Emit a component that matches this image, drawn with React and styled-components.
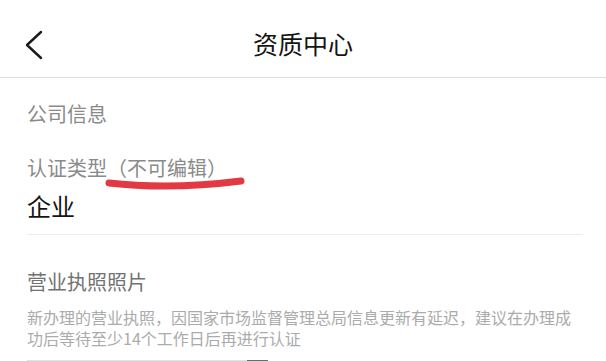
import React from "react";
import styled, { createGlobalStyle } from "styled-components";

const GlobalStyle = createGlobalStyle`
  html, body {
    margin: 0;
    padding: 0;
    background: #fff;
  }
  body {
    font-family: "Noto Sans CJK SC", "Noto Sans", sans-serif;
    overflow: hidden;
  }
`;

const Page = styled.div`
  width: 606px;
  height: 361px;
  overflow: hidden;
  background: #fff;
`;

const Header = styled.header`
  height: 77px;
  border-bottom: 1px solid #dcdcdc;
  display: grid;
  grid-template-columns: 1fr auto 1fr;
  align-items: center;
`;

const BackButton = styled.button`
  justify-self: start;
  margin: 12px 0 0 21px;
  padding: 4px;
  border: 0;
  background: none;
  display: flex;
  align-items: center;
`;

const Title = styled.h1`
  margin: 0;
  font-size: 25px;
  font-weight: 400;
  line-height: 34px;
  color: #141414;
  padding-top: 8px;
`;

const Body = styled.main`
  padding: 0 23px 0 27px;
`;

const SectionTitle = styled.div`
  margin-top: ${(p) => p.$top}px;
  font-size: 20px;
  line-height: 28px;
  color: ${(p) => p.$color || "#8a8a8a"};
`;

const FieldLabel = styled.div`
  position: relative;
  margin-top: 26px;
  font-size: 20px;
  line-height: 28px;
  color: #8a8a8a;
`;

const Scribble = styled.svg`
  position: absolute;
  left: 77px;
  top: 22px;
  pointer-events: none;
`;

const FieldValue = styled.div`
  margin-top: 8px;
  font-size: 24px;
  line-height: 32px;
  color: #141414;
`;

const Divider = styled.hr`
  margin: 12px 0 0;
  border: 0;
  border-top: 1px solid #ececec;
`;

const Hint = styled.p`
  margin: 11px 0 0;
  font-size: 16px;
  line-height: 20.5px;
  color: #ababab;
`;

const PhotoRow = styled.div`
  margin-top: 12px;
  display: flex;
`;

const PhotoFrame = styled.div`
  width: 220px;
  height: 40px;
  border-top: 1px solid #e2e2e2;
`;

const PhotoTab = styled.div`
  width: 21px;
  height: 40px;
  background: #6b6b6b;
`;

const ChevronLeft = () => (
  <svg width="20" height="30" viewBox="0 0 20 30">
    <path
      d="M16 2 L2 15 L16 28"
      fill="none"
      stroke="#1a1a1a"
      strokeWidth="2.4"
      strokeLinecap="round"
      strokeLinejoin="round"
    />
  </svg>
);

export default function App() {
  return (
    <Page>
      <GlobalStyle />
      <Header>
        <BackButton>
          <ChevronLeft />
        </BackButton>
        <Title>资质中心</Title>
        <span />
      </Header>
      <Body>
        <SectionTitle $top={22}>公司信息</SectionTitle>
        <FieldLabel>
          认证类型（不可编辑）
          <Scribble width="142" height="18" viewBox="0 0 142 18">
            <path
              d="M5 7 Q66 14 137 5"
              fill="none"
              stroke="#e23a43"
              strokeWidth="7"
              strokeLinecap="round"
            />
          </Scribble>
        </FieldLabel>
        <FieldValue>企业</FieldValue>
        <Divider />
        <SectionTitle $top={33} $color="#727272">
          营业执照照片
        </SectionTitle>
        <Hint>
          新办理的营业执照，因国家市场监督管理总局信息更新有延迟，建议在办理成功后等待至少14个工作日后再进行认证
        </Hint>
        <PhotoRow>
          <PhotoFrame />
          <PhotoTab />
        </PhotoRow>
      </Body>
    </Page>
  );
}
